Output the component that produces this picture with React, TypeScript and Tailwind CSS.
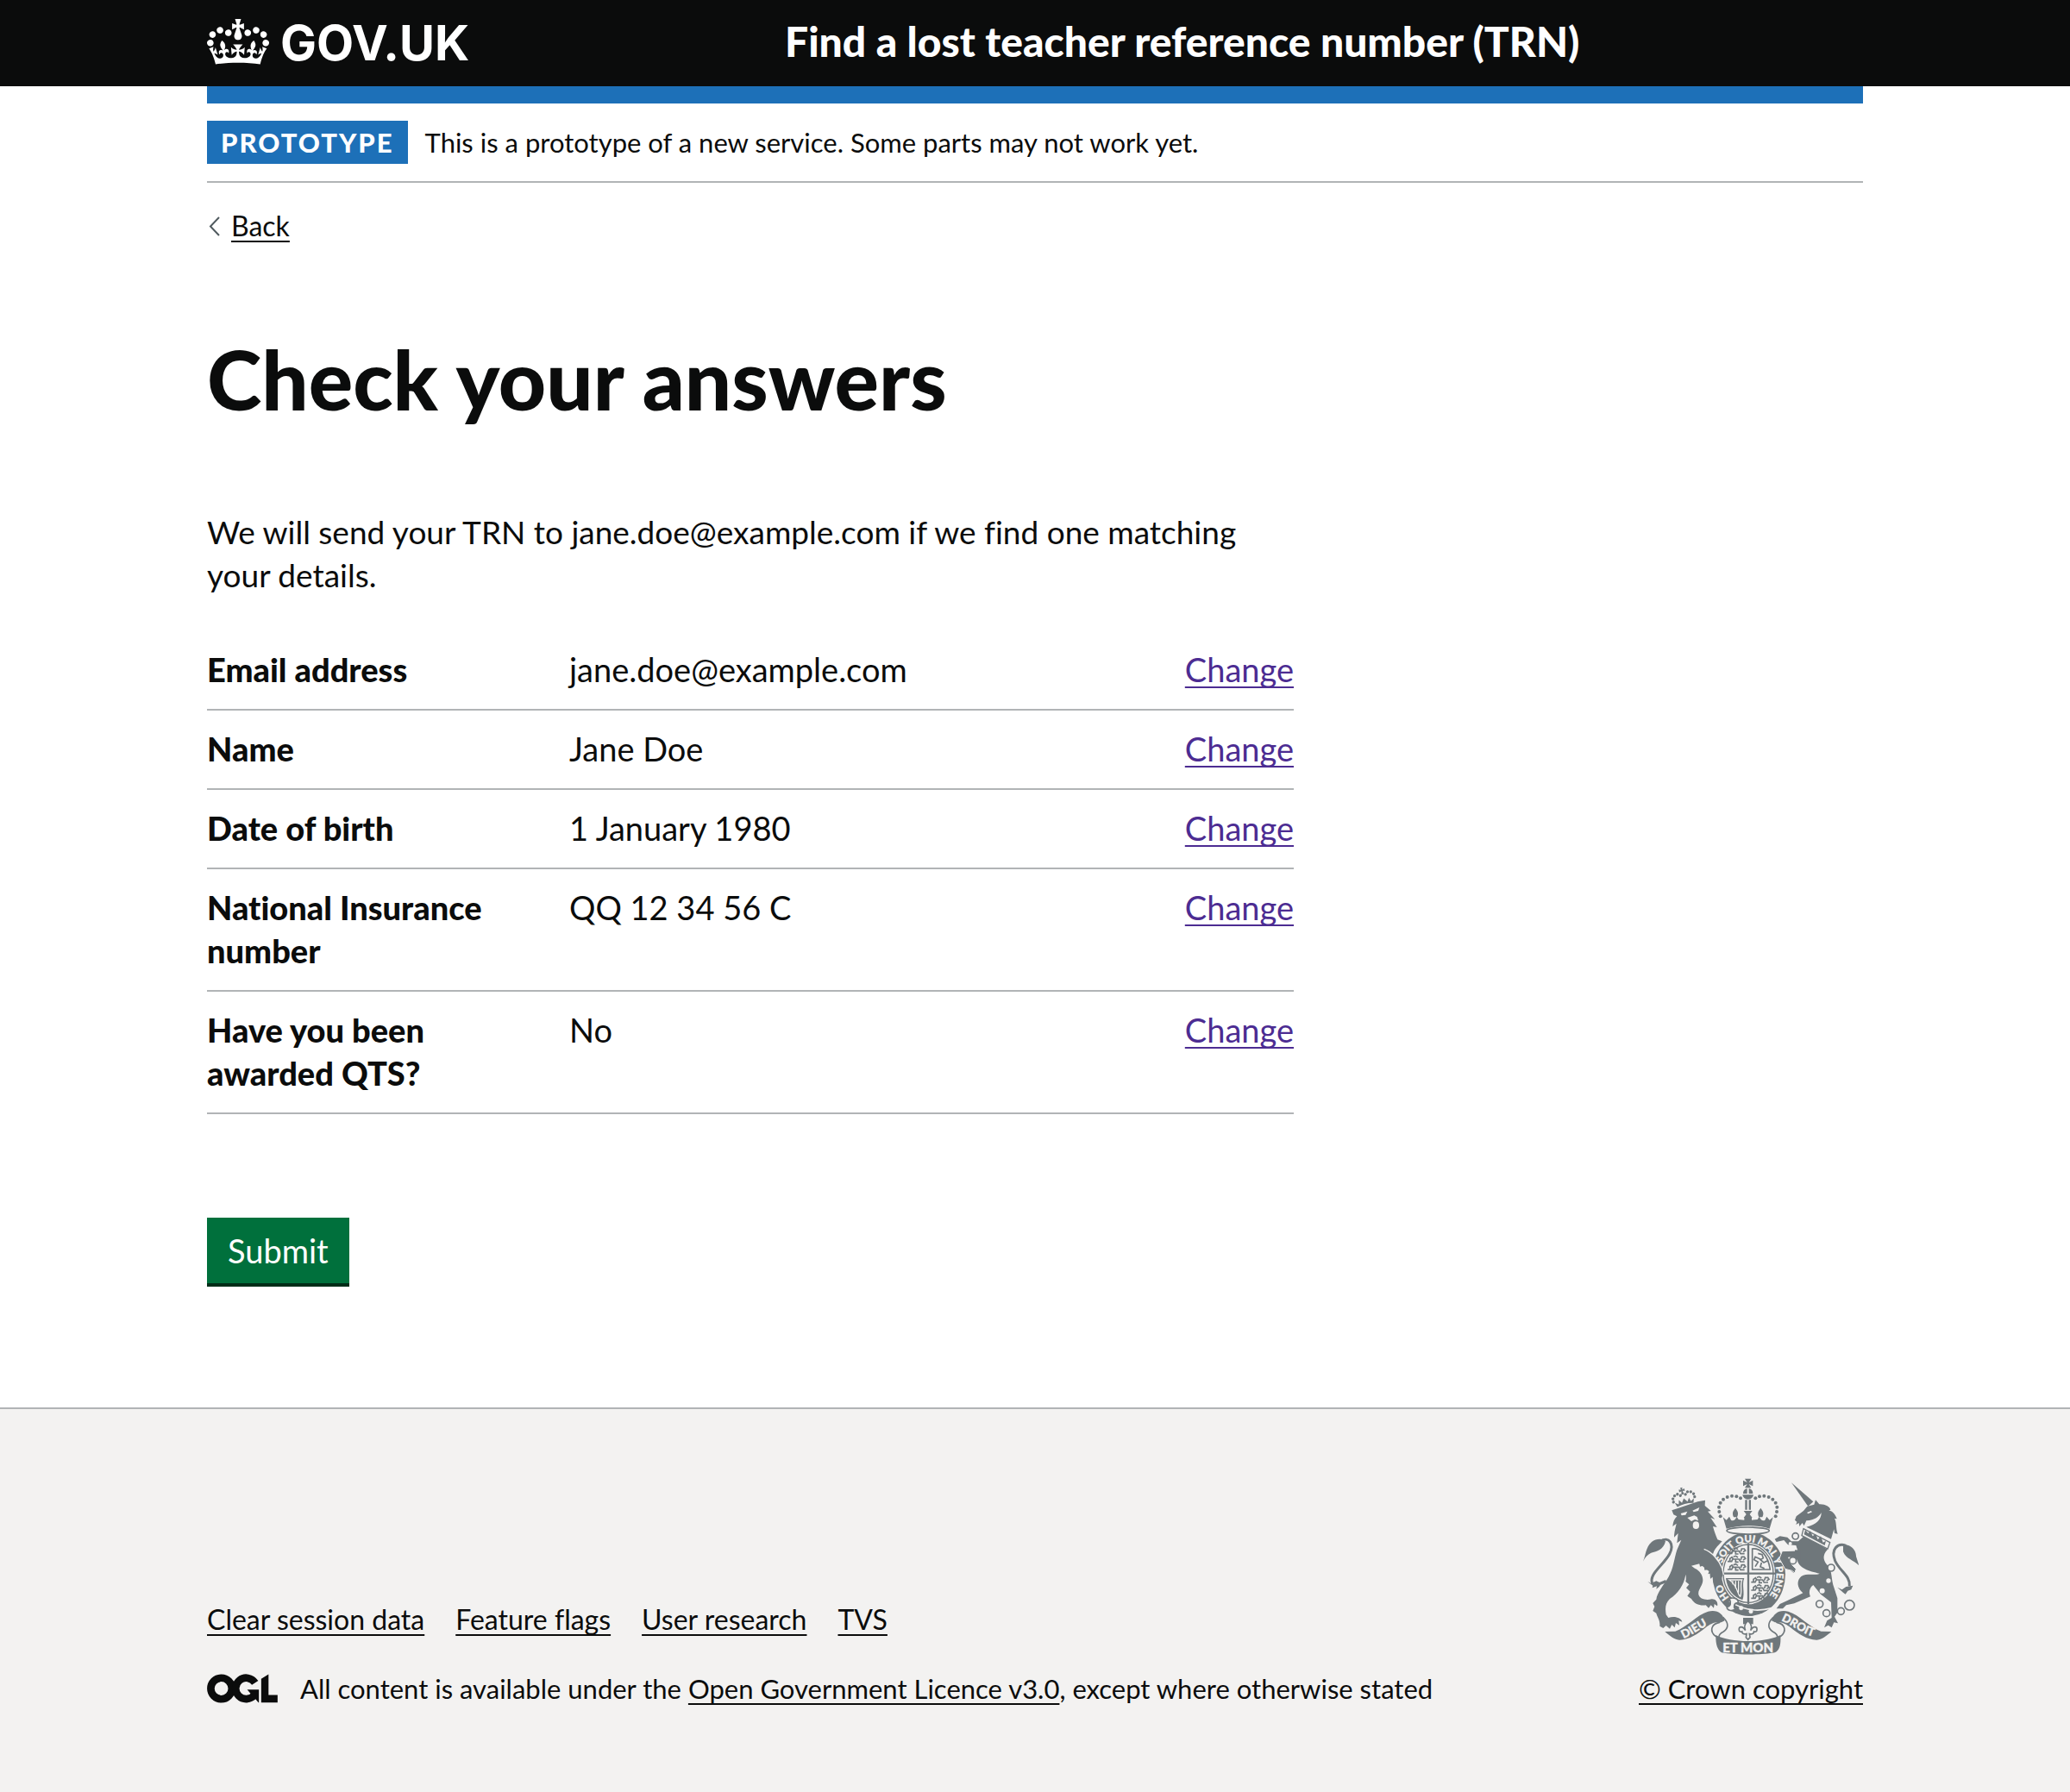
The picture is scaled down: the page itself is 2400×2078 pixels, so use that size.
import React from 'react';

const INK = '#6f777b';
const PAPER = '#f3f2f1';

const link =
  'underline decoration-2 underline-offset-[5px] [text-decoration-skip-ink:none] hover:decoration-4';

const answers = [
  { key: 'Email address', value: 'jane.doe@example.com' },
  { key: 'Name', value: 'Jane Doe' },
  { key: 'Date of birth', value: '1 January 1980' },
  { key: 'National Insurance number', value: 'QQ 12 34 56 C' },
  { key: 'Have you been awarded QTS?', value: 'No' },
];

const footerLinks = ['Clear session data', 'Feature flags', 'User research', 'TVS'];

function Crown() {
  return (
    <svg viewBox="0 0 132 97" className="h-[53px] w-[72px] shrink-0" fill="currentColor" aria-hidden="true">
      <path
        fillRule="evenodd"
        d="M25 30.2c3.5 1.5 7.7-.2 9.1-3.7 1.5-3.6-.2-7.8-3.9-9.2-3.6-1.4-7.6.3-9.1 3.9-1.4 3.5.3 7.5 3.9 9zM9 39.5c3.6 1.5 7.8-.2 9.2-3.7 1.5-3.6-.2-7.8-3.9-9.1-3.6-1.5-7.6.2-9.1 3.8-1.4 3.5.3 7.5 3.8 9zM4.4 57.2c3.5 1.5 7.7-.2 9.1-3.8 1.5-3.6-.2-7.7-3.9-9.1-3.5-1.5-7.6.3-9.1 3.8-1.4 3.5.3 7.6 3.9 9.1zm38.3-21.4c3.5 1.5 7.7-.2 9.1-3.8 1.5-3.6-.2-7.7-3.9-9.1-3.6-1.5-7.6.3-9.1 3.8-1.3 3.6.4 7.7 3.9 9.1zm64.4-5.6c-3.6 1.5-7.8-.2-9.1-3.7-1.5-3.6.2-7.8 3.8-9.2 3.6-1.4 7.7.3 9.2 3.9 1.3 3.5-.4 7.5-3.9 9zm15.9 9.3c-3.6 1.5-7.7-.2-9.1-3.7-1.5-3.6.2-7.8 3.7-9.1 3.6-1.5 7.7.2 9.2 3.8 1.5 3.5-.3 7.5-3.8 9zm4.7 17.7c-3.6 1.5-7.8-.2-9.2-3.8-1.5-3.6.2-7.7 3.9-9.1 3.6-1.5 7.7.3 9.2 3.8 1.3 3.5-.4 7.6-3.9 9.1zM89.3 35.8c-3.6 1.5-7.8-.2-9.2-3.8-1.4-3.6.2-7.7 3.9-9.1 3.6-1.5 7.7.3 9.2 3.8 1.4 3.6-.3 7.7-3.9 9.1zM69.7 17.7l8.9 4.7V9.3l-8.9 2.8c-.2-.3-.5-.6-.9-.9L72.4 0H59.6l3.5 11.2c-.3.3-.6.5-.9.9l-8.8-2.8v13.1l8.8-4.7c.3.3.6.7.9.9l-5 15.4v.1c-.2.8-.4 1.6-.4 2.4 0 4.1 3.1 7.5 7 8.1h.2c.3 0 .7.1 1 .1.4 0 .7 0 1-.1h.2c4-.6 7.1-4.1 7.1-8.1 0-.8-.1-1.7-.4-2.4V34l-5.1-15.4c.4-.2.7-.6 1-.9zM66 92.8c16.9 0 32.8 1.1 47.1 3.2 4-16.9 8.9-26.7 14-33.5l-9.6-3.4c1 4.9 1.1 7.2 0 10.2-1.5-1.4-3-4.3-4.2-8.7L108.6 76c2.8-2 5-3.2 7.5-3.3-4.4 9.4-10 11.9-13.6 11.2-4.3-.8-6.3-4.6-5.6-7.9 1-4.7 5.7-5.9 8-.5 4.3-8.7-3-11.4-7.6-8.8 7.1-7.2 7.9-13.5 2.1-21.1-8 6.1-8.1 12.3-4.5 20.8-4.7-5.4-12.1-2.5-9.5 6.2 3.4-5.2 7.9-2 7.2 3.1-.6 4.3-6.4 7.8-13.5 7.2-10.3-.9-10.9-8-11.2-13.8 2.5-.5 7.1 1.8 11 7.3L80.2 60c-4.1 4.4-8 5.3-12.3 5.4 1.4-4.4 8-11.6 8-11.6H55.5s6.4 7.2 7.9 11.6c-4.2-.1-8-1-12.3-5.4l1.4 16.4c3.9-5.5 8.5-7.7 10.9-7.3-.3 5.8-.9 12.8-11.1 13.8-7.2.6-12.9-2.9-13.5-7.2-.7-5 3.8-8.3 7.1-3.1 2.7-8.7-4.6-11.6-9.4-6.2 3.7-8.5 3.6-14.7-4.6-20.8-5.8 7.6-5 13.9 2.2 21.1-4.7-2.6-11.9.1-7.7 8.8 2.3-5.5 7.1-4.2 8.1.5.7 3.3-1.3 7.1-5.7 7.9-3.5.7-9-1.8-13.5-11.2 2.5.1 4.7 1.3 7.5 3.3l-4.7-15.4c-1.2 4.4-2.7 7.2-4.3 8.7-1.1-3-.9-5.3 0-10.2l-9.5 3.4c5 6.9 9.9 16.7 14 33.5 14.8-2.1 30.8-3.2 47.7-3.2z"
      />
    </svg>
  );
}

function OglMark() {
  return (
    <svg viewBox="0 0 484 196" className="h-[34px] w-[82px] shrink-0" role="img" aria-label="OGL">
      <g fill="none" stroke="currentColor" strokeWidth="51">
        <circle cx="98" cy="98" r="72" />
        <path d="M329 59A72 72 0 1 0 324 143" />
      </g>
      <path fill="currentColor" d="M421 143V0l-50 32v162h112v-51zM275 106h80v88h-3l-20-23-33-38z" />
    </svg>
  );
}

const archDots: [number, number][] = [
  [341, 203], [337, 187], [336, 171], [341, 156], [351, 144], [365, 136], [381, 132], [397, 134], [411, 140],
];
const chain: [number, number, number][] = [
  [602, 272, 11], [593, 357, 12], [726, 382, 12], [686, 508, 12], [710, 540, 12], [760, 533, 12], [790, 512, 17],
];

function QuarterLions({ x, y }: { x: number; y: number }) {
  return (
    <g transform={`translate(${x} ${y})`} fill="none" stroke={INK} strokeWidth="5">
      {[0, 28, 56].map((dy) => (
        <path
          key={dy}
          d={`M0 ${dy + 18}h14l4-8h22l5 9h14M8 ${dy + 17}v-9l7-5 5 7M28 ${dy + 10}v10h10M46 ${dy + 12}l3-10h9l4 6-8 5M20 ${dy + 2}l8-3 8 5`}
        />
      ))}
    </g>
  );
}

function RoyalArms() {
  return (
    <svg viewBox="72 70 750 615" className="h-[205px] w-[250px]" aria-hidden="true">
      <g fill={INK}>
        {/* lion */}
        <path d="M172 182L200 173 262 152 288 147 287 166 308 184 297 186 322 213 307 208 329 241 315 238C320 255 324 268 331 284L347 290 330 308C320 320 316 328 314 340L342 370 350 402 340 430 334 416 326 428 322 412 308 420 314 400 298 404 304 388 286 390 284 374 270 378 268 368 240 375 252 384C270 392 280 408 280 425 280 445 262 458 265 475 268 490 290 496 310 491 325 489 334 503 330 515L320 508 318 522 308 512 300 522 290 512C270 515 250 508 240 490L226 480 236 465 222 452 232 440 220 430C222 420 222 415 220 405 215 440 195 470 165 490 150 505 148 520 152 545L160 556C180 548 205 555 208 570L196 566 198 582 186 574 182 590 172 580 165 594 152 583 142 592 130 585C132 565 122 555 118 540L106 532 112 517 106 505 118 492C120 470 145 440 160 415 178 385 180 350 190 320L205 285 190 296 194 262 180 276C180 255 186 240 188 228L175 238C176 225 180 212 190 203L178 197Z" />
        <path d="M72 360C82 338 80 312 102 292 118 279 142 280 150 290 144 318 120 326 100 330 88 336 78 346 72 360Z" />
        <path d="M88 430L100 436 118 428 136 436 128 448 118 456 120 446 104 452 106 444Z" />
        {/* unicorn */}
        <path d="M588 86L664 152 646 168Z" />
        <path d="M600 216L605 203 630 184 643 168 667 162 672 146 685 161C706 160 722 170 724 180L718 182C734 186 742 200 746 212L738 210C746 225 742 245 749 264L738 262 736 248 726 282 640 240C676 232 692 214 692 190 684 204 670 216 640 218L632 236 626 226 616 238 614 226 604 232 607 222Z" />
        <path d="M632 272L714 318C694 338 698 358 716 376 730 390 726 425 736 450L748 488 748 538 738 552 750 575 736 572 728 590 716 582 702 590 712 566 728 556 726 502 690 474 664 442C650 452 648 468 654 482L598 506 570 512 558 524 536 524 548 508 574 496 628 470C606 450 606 426 622 412 640 400 670 410 686 402 650 394 612 384 608 352L575 340C560 350 580 366 590 374L602 388 596 400 586 392 572 388 566 374 550 350 556 328 610 322 604 304 576 302 562 286 536 292 530 282 548 272 574 276 588 290 612 290Z" />
        <path d="M768 302C790 298 814 318 813 342L823 374C806 356 778 352 768 326Z" />
        <path d="M748 450L764 458 778 448 802 444 796 458 784 462 776 474 768 468Z" />
      </g>
      <g fill="none" stroke={INK} strokeWidth="9">
        <path d="M132 290C162 270 182 300 164 334 148 366 100 398 102 428 104 448 126 440 152 428" />
        <path d="M778 305C748 294 724 318 740 358 756 394 794 410 790 446" />
      </g>
      {/* facial highlights */}
      <g fill={PAPER}>
        <path d="M203 193L226 186 220 198 206 200ZM244 183L268 172 264 184 248 188ZM226 208L250 200 260 205 264 218 252 214 240 220Z" />
        <ellipse cx="256" cy="234" rx="11" ry="13" />
        <path d="M642 190l14-6 4 4-14 6z" />
        <circle cx="717" cy="427" r="8" />
        <circle cx="695" cy="462" r="9" />
        <circle cx="584" cy="298" r="6" />
      </g>
      {/* lion crown */}
      <g transform="translate(216 150) rotate(-14)" fill={INK}>
        <path d="M-29 14L-34-2-22 6-18-8-10 4 0-10 10 4 18-8 22 6 34-2 29 14Q0 6-29 14ZM-4-48h8l-2 7 8-2v9l-8-2 3 12h-10l3-12-8 2v-9l8 2z" />
        {[[-38, -6], [-37, -17], [-29, -26], [-18, -29], [-9, -22], [9, -22], [18, -29], [29, -26], [37, -17], [38, -6]].map(
          ([x, y]) => (
            <circle key={`${x}${y}`} cx={x} cy={y} r="5" />
          ),
        )}
      </g>
      {/* unicorn collar */}
      <path d="M630 246L722 294 714 316 624 270Z" fill={PAPER} stroke={INK} strokeWidth="4" />
      <path d="M632 266L636 250 646 262 654 254 662 272 672 264 680 284 690 272 698 294 708 288 704 304Z" fill={INK} />
      {/* garter */}
      <ellipse cx="440" cy="404" rx="133" ry="152" fill={PAPER} />
      <ellipse cx="440" cy="404" rx="127" ry="146" fill={INK} />
      <ellipse cx="438" cy="402" rx="93" ry="107" fill={PAPER} />
      <ellipse cx="438" cy="402" rx="87" ry="101" fill="none" stroke={INK} strokeWidth="4" />
      <path d="M438 296V508M345 402H532" stroke={INK} strokeWidth="7" />
      <QuarterLions x={366} y={314} />
      <QuarterLions x={448} y={414} />
      <path
        d="M452 316C480 314 506 335 514 388H452ZM472 332l14 4 4 12-10 6 12 10 12-6M480 352l-18-8-4 10 14 8-10 16M484 364l-4 14 14 6"
        fill="none"
        stroke={INK}
        strokeWidth="5"
      />
      <path d="M360 418H424C414 440 428 470 418 494 386 484 364 456 360 418Z" fill={INK} />
      <path
        d="M372 424H416C408 444 418 462 410 482 398 474 404 446 372 424ZM384 428v12M394 428v26M404 428v40"
        fill="none"
        stroke={PAPER}
        strokeWidth="4"
      />
      <path id="garter-line" d="M388 500A97 112 0 1 1 476 508" fill="none" />
      <path d="M372 498C420 530 470 536 520 522" stroke={PAPER} strokeWidth="5" fill="none" />
      <g fill={PAPER} stroke={PAPER} strokeWidth="1" fontFamily="Lato, sans-serif" fontWeight="900" fontSize="34">
        <text>
          <textPath href="#garter-line" startOffset="22">HO</textPath>
        </text>
        <text>
          <textPath href="#garter-line" startOffset="148">SOIT QUI MAL Y PENSE</textPath>
        </text>
        <circle cx="413" cy="522" r="7" />
        <circle cx="447" cy="534" r="7" />
      </g>
      <path d="M372 490C388 482 406 492 402 504 388 504 386 518 392 526 380 536 362 528 364 518 376 516 380 504 372 490Z" fill={PAPER} stroke={INK} strokeWidth="5" />
      {/* foreleg over the garter */}
      <path d="M284 316C310 326 334 352 346 384L350 406 340 430 333 416 325 428 320 410 306 420 304 396 268 368Z" fill={INK} />
      <path d="M284 317C310 326 336 354 348 386L352 406" fill="none" stroke={PAPER} strokeWidth="4" />
      {/* forelegs of the unicorn over the garter */}
      <path d="M610 322L556 324 546 350 566 386 590 392 600 400 604 386 590 372 578 346 612 350Z" fill={INK} stroke={PAPER} strokeWidth="3" />
      <path d="M600 320h20v34h-20z" fill={INK} />
      <g fill={PAPER} stroke={INK} strokeWidth="5">
        {chain.map(([cx, cy, r]) => (
          <circle key={`${cx}-${cy}`} cx={cx} cy={cy} r={r} />
        ))}
      </g>
      {/* imperial crown */}
      <ellipse cx="437" cy="253" rx="74" ry="12" fill={PAPER} stroke={INK} strokeWidth="5" />
      <g fill={INK}>
        <path d="M362 246L350 206 362 216 372 204 378 216C384 220 392 218 398 204L404 214 424 216 424 206 450 206 450 216 470 214 476 204C482 218 490 220 496 216L502 204 512 216 524 206 512 246C465 232 410 232 362 246Z" />
        <path d="M393 174C404 188 404 194 399 206H387C382 194 382 188 393 174ZM481 174C492 188 492 194 487 206H475C470 194 470 188 481 174ZM422 184h30l-9 12 9 12h-30l9-12z" />
        <path d="M427 146h7v34h-7zM440 146h7v34h-7zM418 128a19 16 0 0 0 38 0zM420 124a18 18 0 0 1 14-18v18zM440 106a18 18 0 0 1 14 18h-14z" />
        <path d="M426 72h22l-8 13 14-7v20l-14-7 8 13h-22l8-13-14 7v-20l14 7z" />
        {archDots.map(([x, y]) => (
          <g key={`${x}-${y}`}>
            <circle cx={x} cy={y} r="6" />
            <circle cx={874 - x} cy={y} r="6" />
          </g>
        ))}
      </g>
      {/* motto scroll */}
      {[undefined, 'translate(875 0) scale(-1 1)'].map((transform) => (
        <g key={transform ?? 'left'} transform={transform}>
          <path d="M352 556C368 572 372 590 352 604 340 610 334 616 336 626L324 620C304 604 306 578 338 572Z" fill={PAPER} stroke={INK} strokeWidth="5" />
          <path d="M148 604L184 603C226 588 258 546 298 534 330 526 350 542 356 566L344 572C324 568 304 578 290 590 262 612 232 634 198 633 178 630 164 618 148 604Z" fill={INK} />
        </g>
      ))}
      <path d="M325 616C376 644 499 644 550 616 552 652 546 670 530 677 484 686 391 686 345 677 330 668 324 646 325 616Z" fill={INK} />
      <path id="scroll-left" d="M213 628C250 612 284 584 330 566" fill="none" />
      <path id="scroll-right" d="M552 566C590 580 622 612 676 624" fill="none" />
      <g fill={PAPER} stroke={PAPER} strokeWidth="1" fontFamily="Lato, sans-serif" fontWeight="900">
        <text fontSize="40">
          <textPath href="#scroll-left">DIEU</textPath>
        </text>
        <text fontSize="40">
          <textPath href="#scroll-right">DROIT</textPath>
        </text>
        <text x="437" y="675" fontSize="45" textAnchor="middle">ET MON</text>
      </g>
      {/* fleur-de-lis */}
      <path d="M420 556h35v22h-35z" fill={INK} />
      <path
        d="M437 566C452 580 450 590 446 600 454 584 470 584 468 598 468 604 462 606 458 604 458 612 450 614 442 612L444 624 437 632 430 624 432 612C424 614 416 612 416 604 412 606 406 604 406 598 404 584 420 584 428 600 424 590 422 580 437 566Z"
        fill={PAPER}
        stroke={INK}
        strokeWidth="5"
      />
    </svg>
  );
}

export default function App() {
  return (
    <div className="min-h-screen bg-white font-['Lato',sans-serif] text-[38px] leading-[50px] text-[#0b0c0c] [font-variant-ligatures:none]">
      <header className="bg-[#0b0c0c] text-white">
        <div className="mx-auto flex h-[100px] max-w-[1920px] items-start">
          <a href="#" className="flex w-[670px] items-center gap-[13px] pt-[18px]">
            <Crown />
            <span className="pt-1 font-['Inter',sans-serif] text-[56px] leading-[56px] font-bold">GOV.UK</span>
          </a>
          <a href="#" className="pt-[18px] text-[48px] leading-[60px] font-black">
            Find a lost teacher reference number (TRN)
          </a>
        </div>
      </header>

      <div className="mx-auto max-w-[1920px]">
        <div className="h-5 bg-[#1d70b8]" />
        <div className="flex items-center gap-5 border-b-2 border-[#b1b4b6] py-5">
          <strong className="bg-[#1d70b8] px-4 py-[5px] text-[31px] leading-[40px] font-black tracking-[2px] text-white">
            PROTOTYPE
          </strong>
          <span className="text-[31px] leading-[40px]">
            This is a prototype of a new service. Some parts may not work yet.
          </span>
        </div>
        <a href="#" className="mt-[30px] inline-flex items-center gap-3 align-top text-[32px] leading-[40px]">
          <svg viewBox="0 0 16 24" className="h-6 w-4" fill="none" stroke="#505a5f" strokeWidth="2" aria-hidden="true">
            <path d="M14 2L4 12.500 14 23" />
          </svg>
          <span className={link}>Back</span>
        </a>

        <main className="max-w-[1260px] pt-[107px] pb-[144px]">
          <h1 className="text-[96px] leading-[100px] font-black">Check your answers</h1>
          <p className="mt-[103px] mb-10 text-[37px]">
            We will send your TRN to jane.doe@example.com if we find one matching your details.
          </p>
          <dl>
            {answers.map((row) => (
              <div key={row.key} className="flex border-b-2 border-[#b1b4b6] pt-[19px] pb-[21px]">
                <dt className="w-1/3 pr-10 font-black">{row.key}</dt>
                <dd className="flex-1">{row.value}</dd>
                <dd>
                  <a href="#" aria-label={`Change ${row.key}`} className={`text-[#4c2c92] ${link}`}>
                    Change
                  </a>
                </dd>
              </div>
            ))}
          </dl>
          <button
            type="button"
            className="mt-[120px] block bg-[#00703c] px-6 py-[13px] leading-[50px] text-white shadow-[0_4px_0_#002d18]"
          >
            Submit
          </button>
        </main>
      </div>

      <footer className="border-t-2 border-[#b1b4b6] bg-[#f3f2f1] pt-20 pb-[100px] text-[31px] leading-[40px]">
        <div className="mx-auto flex max-w-[1920px] items-end justify-between">
          <div>
            <ul className="mb-10 flex gap-9 text-[32px]">
              {footerLinks.map((label) => (
                <li key={label}>
                  <a href="#" className={link}>
                    {label}
                  </a>
                </li>
              ))}
            </ul>
            <div className="flex items-center gap-[26px]">
              <OglMark />
              <span>
                All content is available under the{' '}
                <a href="#" className={link}>
                  Open Government Licence v3.0
                </a>
                , except where otherwise stated
              </span>
            </div>
          </div>
          <a href="#" className={`flex flex-col items-center gap-[19px] ${link}`}>
            <RoyalArms />
            <span>© Crown copyright</span>
          </a>
        </div>
      </footer>
    </div>
  );
}
